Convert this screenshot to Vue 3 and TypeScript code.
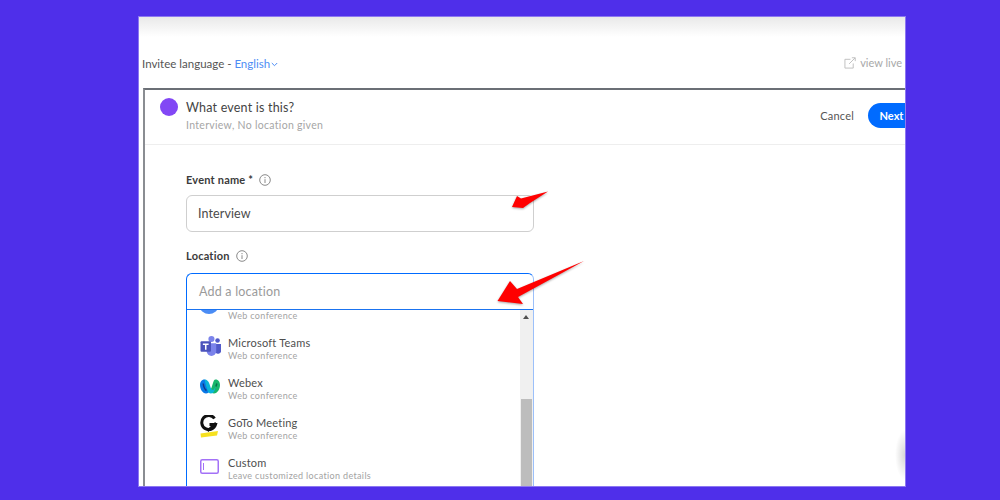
<template>
  <div class="page">
    <div class="frame">
      <div class="top-shade"></div>
      <div class="lang-row">
        <div class="lang">
          Invitee language - <span class="lang-value">English</span>
          <svg class="chev" width="7" height="5" viewBox="0 0 7 5"><path d="M.8 1 3.500 3.700 6.200 1" fill="none" stroke="#4d8df5" stroke-width="1" /></svg>
        </div>
        <div class="view-live">
          <svg width="12" height="12" viewBox="0 0 13 13" fill="none" stroke="#bdbdbd" stroke-width="1">
            <path d="M7 2.500H1v9.500h9V7" />
            <path d="M5.500 7.500 12 1M8.500 .8H12.200V4.500" />
          </svg>
          <span>view live</span>
        </div>
      </div>

      <section class="card">
        <header class="card-head">
          <span class="dot"></span>
          <div class="head-text">
            <div class="head-title">What event is this?</div>
            <div class="head-sub">Interview, No location given</div>
          </div>
          <span class="cancel">Cancel</span>
          <button class="next">Next</button>
        </header>

        <div class="card-body">
          <label class="field-label">
            Event name *
            <svg class="info" width="12" height="12" viewBox="0 0 12 12"><circle cx="6" cy="6" r="5.300" fill="none" stroke="#8a8a8a" /><path d="M6 5.200V9M6 3v1.200" stroke="#8a8a8a" /></svg>
          </label>
          <div class="name-input">Interview</div>

          <label class="field-label loc-label">
            Location
            <svg class="info" width="12" height="12" viewBox="0 0 12 12"><circle cx="6" cy="6" r="5.300" fill="none" stroke="#8a8a8a" /><path d="M6 5.200V9M6 3v1.200" stroke="#8a8a8a" /></svg>
          </label>
          <div class="loc-box">
            <div class="loc-input">Add a location</div>
            <div class="loc-list">
              <div class="options">
                <div class="cut-row">
                  <span class="cut-dot"></span>
                  <span class="opt-sub">Web conference</span>
                </div>
                <div v-for="o in options" :key="o.name" class="opt">
                  <span class="opt-icon">
                    <svg v-if="o.icon === 'teams'" width="21" height="20" viewBox="0 0 22 21">
                      <circle cx="12" cy="3.200" r="3.200" fill="#7b83eb" />
                      <circle cx="18.400" cy="4.800" r="2.400" fill="#5059c9" />
                      <path d="M15.500 8.500h6.500v6a3.300 3.300 0 0 1-6.500 1.600z" fill="#5059c9" />
                      <path d="M7 7.500h10v8.500a5 5 0 0 1-10 0z" fill="#7b83eb" />
                      <rect x="0.500" y="5.500" width="11" height="11" rx="1" fill="#4b53bc" />
                      <path d="M3 8h6v1.400H6.800v5H5.200v-5H3z" fill="#fff" />
                    </svg>
                    <svg v-else-if="o.icon === 'webex'" width="20" height="15" viewBox="0 0 20 15">
                      <path d="M4.500 .5C1.500 .5 0 3 0 6c0 4 2.500 8.500 6 8.500 1.800 0 3.200-1 4-2.500-1.200-2-2-5-3-8-.5-1.800-1.200-3.500-2.500-3.500z" fill="#0a78e6" />
                      <path d="M15.500 .5C18.500 .5 20 3 20 6c0 4-2.500 8.500-6 8.500-1.800 0-3.200-1-4-2.500 1.200-2 2-5 3-8 .5-1.800 1.200-3.500 2.500-3.500z" fill="#17b66c" />
                      <path d="M4.500 .5C7 .5 8.500 2 9.500 5l1.300 4c.4 1.300 1.200 2 2 2 1.200 0 2.200-2 2.700-4-.2 4-1.800 7.500-4.500 7.500-2 0-3-1.600-3.800-4l-1.300-4C5.200 3.500 5 1.500 4.500 .5z" fill="#0bb4d8" />
                      <path d="M3.200 4.500c.4 3 1.300 6 3.300 7" fill="none" stroke="#123a8c" stroke-width="1.500" />
                      <path d="M16.800 4.500c-.2 1-.5 2-.9 3" fill="none" stroke="#0b6e4f" stroke-width="1.500" />
                    </svg>
                    <svg v-else-if="o.icon === 'goto'" width="19" height="23" viewBox="0 0 19 23">
                      <path d="M0.500 18.500 18 16 17 20.500 1 22.500z" fill="#f6e120" />
                      <path d="M14.500 3.500A7 7 0 1 0 15.500 9.500H9.500" fill="none" stroke="#111" stroke-width="3" />
                      <path d="M7.500 16 16 8" stroke="#111" stroke-width="2.500" />
                    </svg>
                    <svg v-else width="19" height="15" viewBox="0 0 19 15" fill="none">
                      <rect x="0.750" y="0.750" width="17.500" height="13.500" rx="1.500" stroke="#a371f7" stroke-width="1.500" />
                      <path d="M3.500 4v7" stroke="#a371f7" />
                    </svg>
                  </span>
                  <div class="opt-text">
                    <div class="opt-name">{{ o.name }}</div>
                    <div class="opt-sub">{{ o.sub }}</div>
                  </div>
                </div>
              </div>
              <div class="scrollbar">
                <span class="scroll-up"></span>
                <span class="scroll-thumb"></span>
              </div>
            </div>
          </div>
        </div>
      </section>

      <div class="side-shade"></div>

      <svg class="arrow arrow-a" width="40" height="24" viewBox="0 0 40 24">
        <path d="M1 16 6 5 10 7.500 37 .5 19 12 12 17z" fill="#ff0000" />
      </svg>
      <svg class="arrow arrow-b" width="90" height="48" viewBox="0 0 90 48">
        <path d="M.5 42 13 22 20 30 87 2 21 38 26 45z" fill="#ff0000" />
      </svg>
    </div>
  </div>
</template>

<script setup lang="ts">
interface LocationOption {
  name: string
  sub: string
  icon: 'teams' | 'webex' | 'goto' | 'custom'
}

const options: LocationOption[] = [
  { name: 'Microsoft Teams', sub: 'Web conference', icon: 'teams' },
  { name: 'Webex', sub: 'Web conference', icon: 'webex' },
  { name: 'GoTo Meeting', sub: 'Web conference', icon: 'goto' },
  { name: 'Custom', sub: 'Leave customized location details', icon: 'custom' }
]
</script>

<style>
html,
body {
  margin: 0;
  background: #4f2fea;
}
</style>

<style scoped>
.page {
  height: 500px;
  padding: 17px 0 0 139px;
  box-sizing: border-box;
  background: #4f2fea;
  font-family: Lato, "Open Sans", sans-serif;
  color: #4a4a4a;
  overflow: hidden;
}
.frame {
  position: relative;
  width: 766px;
  height: 469px;
  background: #fff;
  overflow: hidden;
  box-shadow: 0 0 0 1px rgba(255, 255, 255, 0.35);
}
.top-shade {
  height: 20px;
  background: linear-gradient(#e9e9e9, #fff);
}
.lang-row {
  height: 51px;
  padding: 0 3px;
  display: flex;
  align-items: flex-start;
  justify-content: space-between;
  font-size: 11.500px;
}
.lang {
  margin-top: 20px;
  color: #555;
}
.lang-value {
  color: #4d8df5;
}
.chev {
  margin-left: 1px;
  vertical-align: 1px;
}
.view-live {
  margin-top: 19px;
  display: flex;
  align-items: center;
  gap: 4px;
  font-size: 11px;
  color: #a8a8a8;
}
.card {
  margin-left: 4px;
  height: 400px;
  border-top: 2px solid #6b6f76;
  border-left: 2px solid #8a8d92;
  box-sizing: border-box;
}
.card-head {
  height: 55px;
  display: flex;
  align-items: flex-start;
  border-bottom: 1px solid #eeeeee;
  box-sizing: border-box;
}
.dot {
  width: 18px;
  height: 18px;
  margin: 8px 0 0 15px;
  border-radius: 50%;
  background: #8247f5;
}
.head-text {
  margin-left: 8px;
  flex: 1;
}
.head-title {
  margin-top: 10px;
  font-size: 12.500px;
  line-height: 15px;
  letter-spacing: 0.200px;
  color: #444;
}
.head-sub {
  margin-top: 4px;
  font-size: 10.500px;
  line-height: 13px;
  letter-spacing: 0.300px;
  color: #a6a6a6;
}
.cancel {
  margin: 19px 14px 0 0;
  font-size: 11px;
  line-height: 14px;
  letter-spacing: 0.200px;
  color: #555;
}
.next {
  width: 50px;
  height: 25px;
  margin: 13px -13px 0 0;
  padding: 0 3px 0 0;
  border: 0;
  border-radius: 13px;
  background: #006bff;
  color: #fff;
  font: 700 11px Lato, "Open Sans", sans-serif;
}
.card-body {
  padding: 27px 0 0 41px;
}
.field-label {
  display: flex;
  align-items: center;
  gap: 6px;
  height: 14px;
  font-size: 11px;
  font-weight: 700;
  letter-spacing: 0.200px;
  color: #3b3b3b;
}
.info {
  margin-top: 1px;
}
.name-input {
  width: 348px;
  height: 37px;
  margin-top: 9px;
  padding-left: 11px;
  box-sizing: border-box;
  border: 1px solid #cfcfcf;
  border-radius: 6px;
  font-size: 12.500px;
  line-height: 35px;
  letter-spacing: 0.100px;
  color: #4a4a4a;
}
.loc-label {
  margin-top: 16px;
}
.loc-box {
  width: 348px;
  margin-top: 11px;
  box-sizing: border-box;
  border: 1px solid #006bff;
  border-right-color: #9cc0fa;
  border-radius: 6px 6px 0 0;
  border-bottom: 0;
  height: 220px;
}
.loc-input {
  height: 36px;
  padding-left: 12px;
  box-sizing: border-box;
  border-bottom: 1px solid #1a73f0;
  font-size: 12.500px;
  line-height: 35px;
  letter-spacing: 0.200px;
  color: #9a9a9a;
}
.loc-list {
  display: flex;
  height: 180px;
  overflow: hidden;
}
.options {
  flex: 1;
  min-width: 0;
}
.cut-row {
  position: relative;
  height: 11px;
  padding-left: 41px;
  line-height: 11px;
}
.cut-row .opt-sub {
  display: block;
  margin-top: 0;
  line-height: 11px;
}
.cut-dot {
  position: absolute;
  left: 13px;
  top: -11px;
  width: 18px;
  height: 15px;
  border-radius: 50%;
  background: #4a8cf5;
}
.opt {
  display: flex;
  align-items: flex-start;
  height: 40px;
}
.cut-row + .opt {
  margin-top: 15px;
}
.opt-icon {
  width: 41px;
  height: 20px;
  display: flex;
  align-items: center;
  padding-left: 13px;
  box-sizing: border-box;
}
.opt-name {
  font-size: 11px;
  line-height: 13px;
  letter-spacing: 0.200px;
  color: #4e4e4e;
}
.opt-sub {
  margin-top: 1px;
  font-size: 9px;
  line-height: 12px;
  letter-spacing: 0.350px;
  color: #a3a3a3;
}
.scrollbar {
  position: relative;
  width: 13px;
  background: #f0f0f0;
  flex: none;
}
.scroll-up {
  position: absolute;
  left: 3px;
  top: 5px;
  border: 3px solid transparent;
  border-top: 0;
  border-bottom: 4px solid #505050;
}
.scroll-thumb {
  position: absolute;
  left: 1px;
  right: 1px;
  top: 89px;
  height: 90px;
  background: #bdbdbd;
}
.side-shade {
  position: absolute;
  right: 0;
  top: 413px;
  width: 10px;
  height: 50px;
  background: radial-gradient(ellipse at right center, rgba(0, 0, 0, 0.16), rgba(0, 0, 0, 0) 70%);
}
.arrow {
  position: absolute;
  filter: drop-shadow(0 1px 1px rgba(0, 0, 0, 0.35));
}
.arrow-a {
  left: 372px;
  top: 174px;
}
.arrow-b {
  left: 358px;
  top: 242px;
}
</style>
